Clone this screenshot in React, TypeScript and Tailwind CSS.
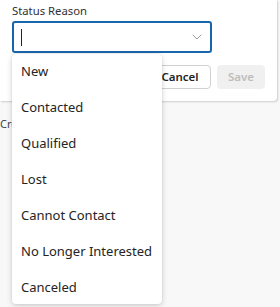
import { ChevronDown } from 'lucide-react'

const options = [
  'New',
  'Contacted',
  'Qualified',
  'Lost',
  'Cannot Contact',
  'No Longer Interested',
  'Canceled',
]

export default function App() {
  return (
    <div
      className="relative w-[280px] h-[307px] overflow-hidden bg-[#f8f8f8] text-[#242424]"
      style={{ fontFamily: '"Noto Sans", "Open Sans", sans-serif' }}
    >
      <div className="w-[277px] h-[101px] bg-white rounded-br-[4px] shadow-[1px_1px_2px_rgba(0,0,0,0.18)] px-3 pt-[2px]">
        <div className="text-[11.3px] leading-[18px] text-[#323130]">Status Reason</div>
        <div className="mt-[1px] flex items-center w-[200px] h-[32px] border-2 border-[#1a66ac] rounded-[3px] pl-[7px] pr-[5px]">
          <span className="w-px h-[17px] bg-[#242424]" />
          <ChevronDown className="ml-auto size-[16px] text-[#707070]" strokeWidth={1} />
        </div>
        <div className="mt-3 flex justify-end gap-[6px]">
          <button className="h-[24px] w-[62px] rounded-[4px] border border-[#d1d1d1] bg-white text-[11.5px] font-semibold text-[#242424]">
            Cancel
          </button>
          <button className="h-[24px] w-[48px] rounded-[4px] bg-[#f0f0f0] text-[11.5px] font-semibold text-[#bdbdbd]">
            Save
          </button>
        </div>
      </div>
      <div className="mt-[15px] text-[11px] text-[#424242]">Created On</div>

      <ul className="absolute left-[12px] top-[54px] w-[150px] h-[250px] bg-white rounded-[4px] shadow-[0_2px_6px_rgba(0,0,0,0.16),0_0_2px_rgba(0,0,0,0.12)]">
        {options.map((o) => (
          <li key={o} className="h-[36px] flex items-center whitespace-nowrap pl-[9px] text-[13px] text-[#242424]">
            {o}
          </li>
        ))}
      </ul>
    </div>
  )
}
